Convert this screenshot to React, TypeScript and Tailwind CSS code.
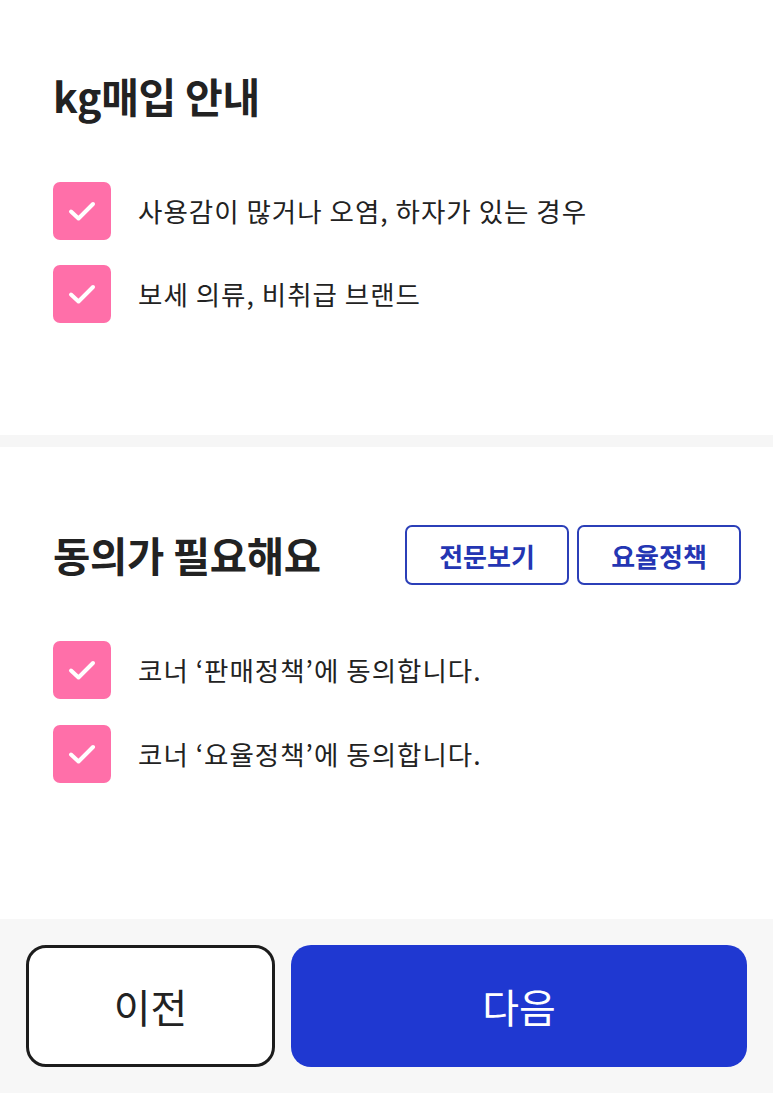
import React from "react";

const font = { fontFamily: '"Noto Sans CJK KR", "Noto Sans", sans-serif' };

function Check() {
  return (
    <div className="w-[58px] h-[58px] shrink-0 rounded-[7px] bg-[#ff6fa9] flex items-center justify-center">
      <svg width="30" height="30" viewBox="0 0 30 30" fill="none">
        <path d="M4 15.5 L11.5 22.5 L26 8" stroke="white" strokeWidth="4" strokeLinecap="round" strokeLinejoin="round" />
      </svg>
    </div>
  );
}

function Row({ text }: { text: string }) {
  return (
    <div className="flex items-center h-[58px]">
      <Check />
      <span className="ml-[27px] text-[26.5px] text-[#222] tracking-[1px]">{text}</span>
    </div>
  );
}

export default function App() {
  return (
    <div className="w-[773px] h-[1093px] bg-white flex flex-col" style={font}>
      <div className="h-[435px] pl-[53px] pt-[72px] flex flex-col shrink-0">
        <div className="h-[48px] flex items-center text-[41px] font-bold text-[#222] tracking-[-0.3px]">kg매입 안내</div>
        <div className="mt-[62px] flex flex-col gap-[25px]">
          <Row text="사용감이 많거나 오염, 하자가 있는 경우" />
          <Row text="보세 의류, 비취급 브랜드" />
        </div>
      </div>
      <div className="h-[12px] bg-[#f6f6f6] shrink-0" />
      <div className="h-[472px] pl-[53px] pr-[32px] pt-[78px] flex flex-col shrink-0">
        <div className="h-[60px] flex items-center justify-between">
          <div className="text-[40.5px] font-bold text-[#222] tracking-[-0.3px]">동의가 필요해요</div>
          <div className="flex gap-[8px]">
            <button className="w-[164px] h-[60px] rounded-[7px] border-2 border-[#2b3fb8] text-[#2436b3] text-[26px] font-bold flex items-center justify-center">전문보기</button>
            <button className="w-[164px] h-[60px] rounded-[7px] border-2 border-[#2b3fb8] text-[#2436b3] text-[26px] font-bold flex items-center justify-center">요율정책</button>
          </div>
        </div>
        <div className="mt-[56px] flex flex-col gap-[26px]">
          <Row text="코너 ‘판매정책’에 동의합니다." />
          <Row text="코너 ‘요율정책’에 동의합니다." />
        </div>
      </div>
      <div className="flex-1 bg-[#f7f7f7] px-[26px] pt-[26px] pb-[26px] flex gap-[16px]">
        <button className="w-[249px] h-[122px] rounded-[20px] border-[3px] border-[#1c1c1c] bg-white text-[40px] text-[#222] flex items-center justify-center">이전</button>
        <button className="flex-1 h-[122px] rounded-[20px] bg-[#1f38d1] text-white text-[40px] flex items-center justify-center">다음</button>
      </div>
    </div>
  );
}
